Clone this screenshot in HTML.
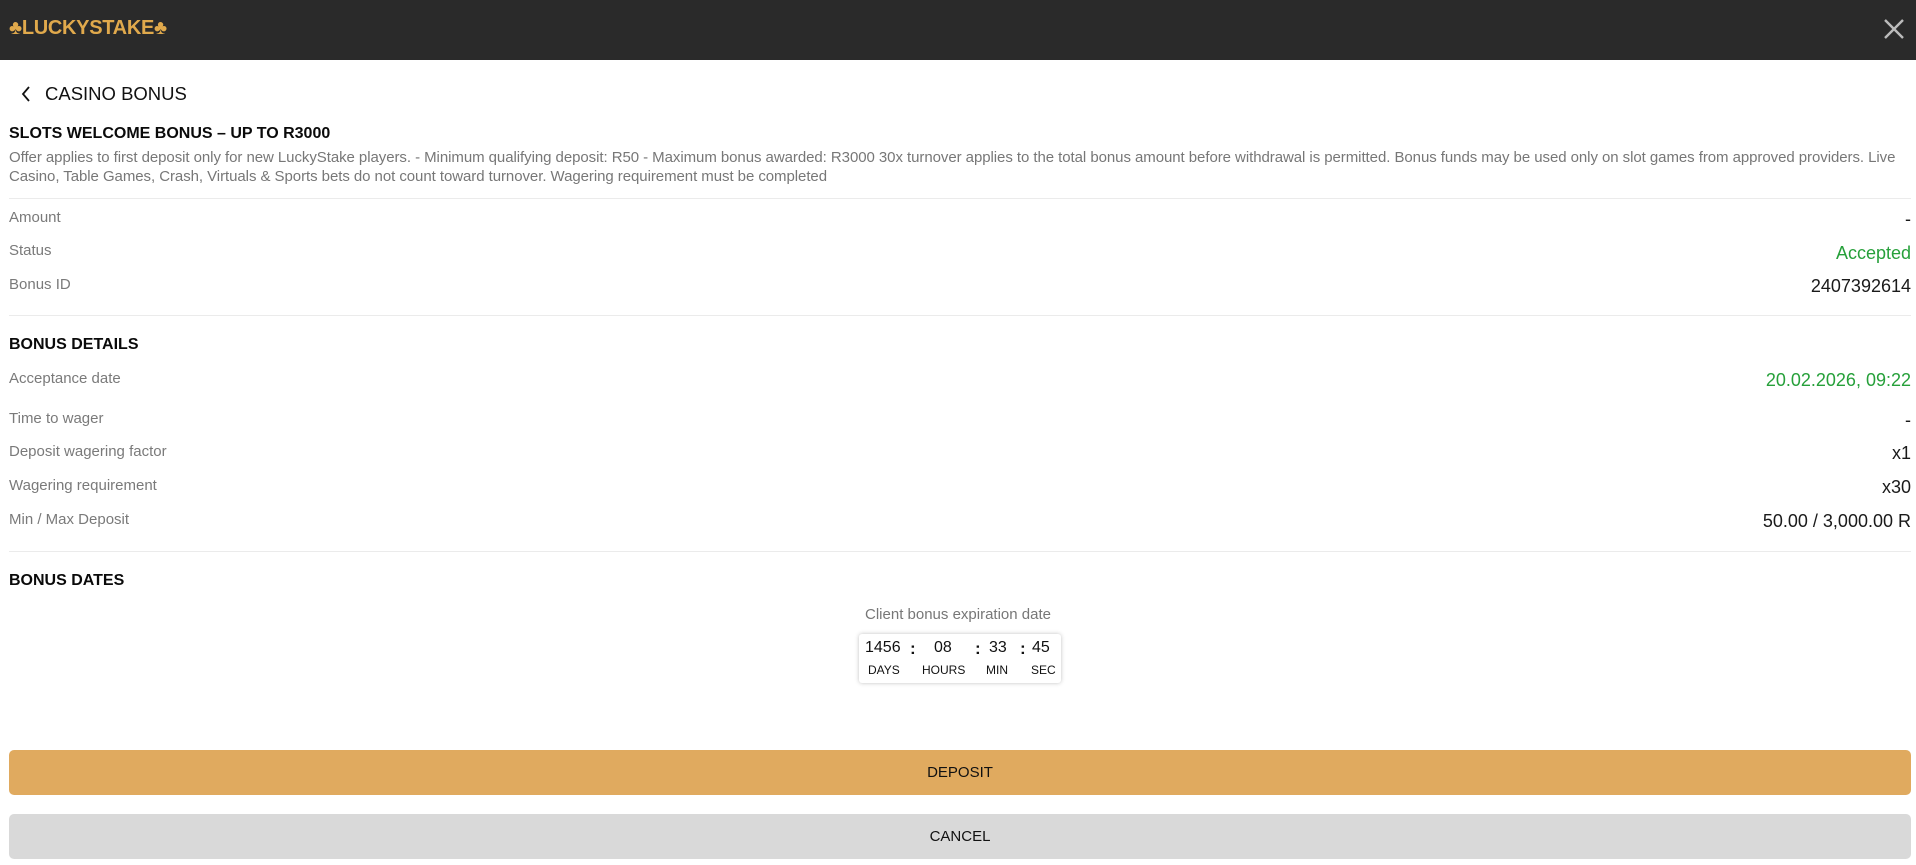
<!DOCTYPE html>
<html><head><meta charset="utf-8"><style>
*{margin:0;padding:0;box-sizing:border-box}
body{width:1916px;height:865px;background:#fff;font-family:"Liberation Sans",Arial,sans-serif;position:relative;overflow:hidden;color:#111}
.a{position:absolute;white-space:nowrap}
.hdr{position:absolute;left:0;top:0;width:1916px;height:60px;background:#2a2a2a}
.lbl{left:9px;font-size:15px;color:#7a7a7a}
.val{right:5px;font-size:18px;color:#1a1a1a;text-align:right}
.g{color:#26a03a}
.h{left:9px;font-size:16px;font-weight:bold;color:#0a0a0a}
.hr{position:absolute;left:9px;right:5px;height:1px;background:#ebebeb}
.btn{position:absolute;left:9px;right:5px;height:45px;border-radius:5px;font-size:15px;text-align:center;line-height:45px;color:#111}
</style></head><body>
<div class="hdr">
 <div class="a" style="left:9px;top:17px;font-size:20px;font-weight:bold;color:#e0a94c;letter-spacing:-0.3px">♣LUCKYSTAKE♣</div>
 <svg class="a" style="left:1882px;top:17px" width="24" height="24" viewBox="0 0 24 24"><path d="M3 3L21 21M21 3L3 21" stroke="#bbb" stroke-width="2.4"/></svg>
</div>
<svg class="a" style="left:20px;top:86px" width="12" height="16" viewBox="0 0 12 16"><path d="M9 1L3 8L9 15" stroke="#111" stroke-width="1.8" fill="none"/></svg>
<div class="a" style="left:45px;top:83px;font-size:18.5px;color:#111">CASINO BONUS</div>
<div class="a h" style="top:125px">SLOTS WELCOME BONUS – UP TO R3000</div>
<div class="a" style="left:9px;top:148px;width:1912px;white-space:normal;font-size:15px;line-height:19px;color:#777;letter-spacing:-0.06px">Offer applies to first deposit only for new LuckyStake players. - Minimum qualifying deposit: R50 - Maximum bonus awarded: R3000 30x turnover applies to the total bonus amount before withdrawal is permitted. Bonus funds may be used only on slot games from approved providers. Live Casino, Table Games, Crash, Virtuals &amp; Sports bets do not count toward turnover. Wagering requirement must be completed</div>
<div class="hr" style="top:198px"></div>
<div class="a lbl" style="top:209px">Amount</div><div class="a val" style="top:209px">-</div>
<div class="a lbl" style="top:242px">Status</div><div class="a val g" style="top:243px">Accepted</div>
<div class="a lbl" style="top:276px">Bonus ID</div><div class="a val" style="top:276px">2407392614</div>
<div class="hr" style="top:315px"></div>
<div class="a h" style="top:336px">BONUS DETAILS</div>
<div class="a lbl" style="top:370px">Acceptance date</div><div class="a val g" style="top:370px">20.02.2026, 09:22</div>
<div class="a lbl" style="top:410px">Time to wager</div><div class="a val" style="top:410px">-</div>
<div class="a lbl" style="top:443px">Deposit wagering factor</div><div class="a val" style="top:443px">x1</div>
<div class="a lbl" style="top:477px">Wagering requirement</div><div class="a val" style="top:477px">x30</div>
<div class="a lbl" style="top:511px">Min / Max Deposit</div><div class="a val" style="top:511px">50.00 / 3,000.00 R</div>
<div class="hr" style="top:551px"></div>
<div class="a h" style="top:572px">BONUS DATES</div>
<div class="a" style="left:0;width:1916px;text-align:center;top:606px;font-size:15px;color:#777">Client bonus expiration date</div>
<div class="a" style="left:859px;top:634px;width:202px;height:49px;border-radius:3px;box-shadow:0 0 4px rgba(0,0,0,0.25);background:#fff"></div>
<div class="a" style="left:865px;top:639px;font-size:16px">1456</div>
<div class="a" style="left:910px;top:639px;font-size:17px;font-weight:bold">:</div>
<div class="a" style="left:934px;top:639px;font-size:16px">08</div>
<div class="a" style="left:975px;top:639px;font-size:17px;font-weight:bold">:</div>
<div class="a" style="left:989px;top:639px;font-size:16px">33</div>
<div class="a" style="left:1020px;top:639px;font-size:17px;font-weight:bold">:</div>
<div class="a" style="left:1032px;top:639px;font-size:16px">45</div>
<div class="a" style="left:868px;top:663px;font-size:12px">DAYS</div>
<div class="a" style="left:922px;top:663px;font-size:12px">HOURS</div>
<div class="a" style="left:986px;top:663px;font-size:12px">MIN</div>
<div class="a" style="left:1031px;top:663px;font-size:12px">SEC</div>
<div class="btn" style="top:750px;background:#e0aa5f">DEPOSIT</div>
<div class="btn" style="top:814px;background:#d9d9d9">CANCEL</div>
</body></html>
